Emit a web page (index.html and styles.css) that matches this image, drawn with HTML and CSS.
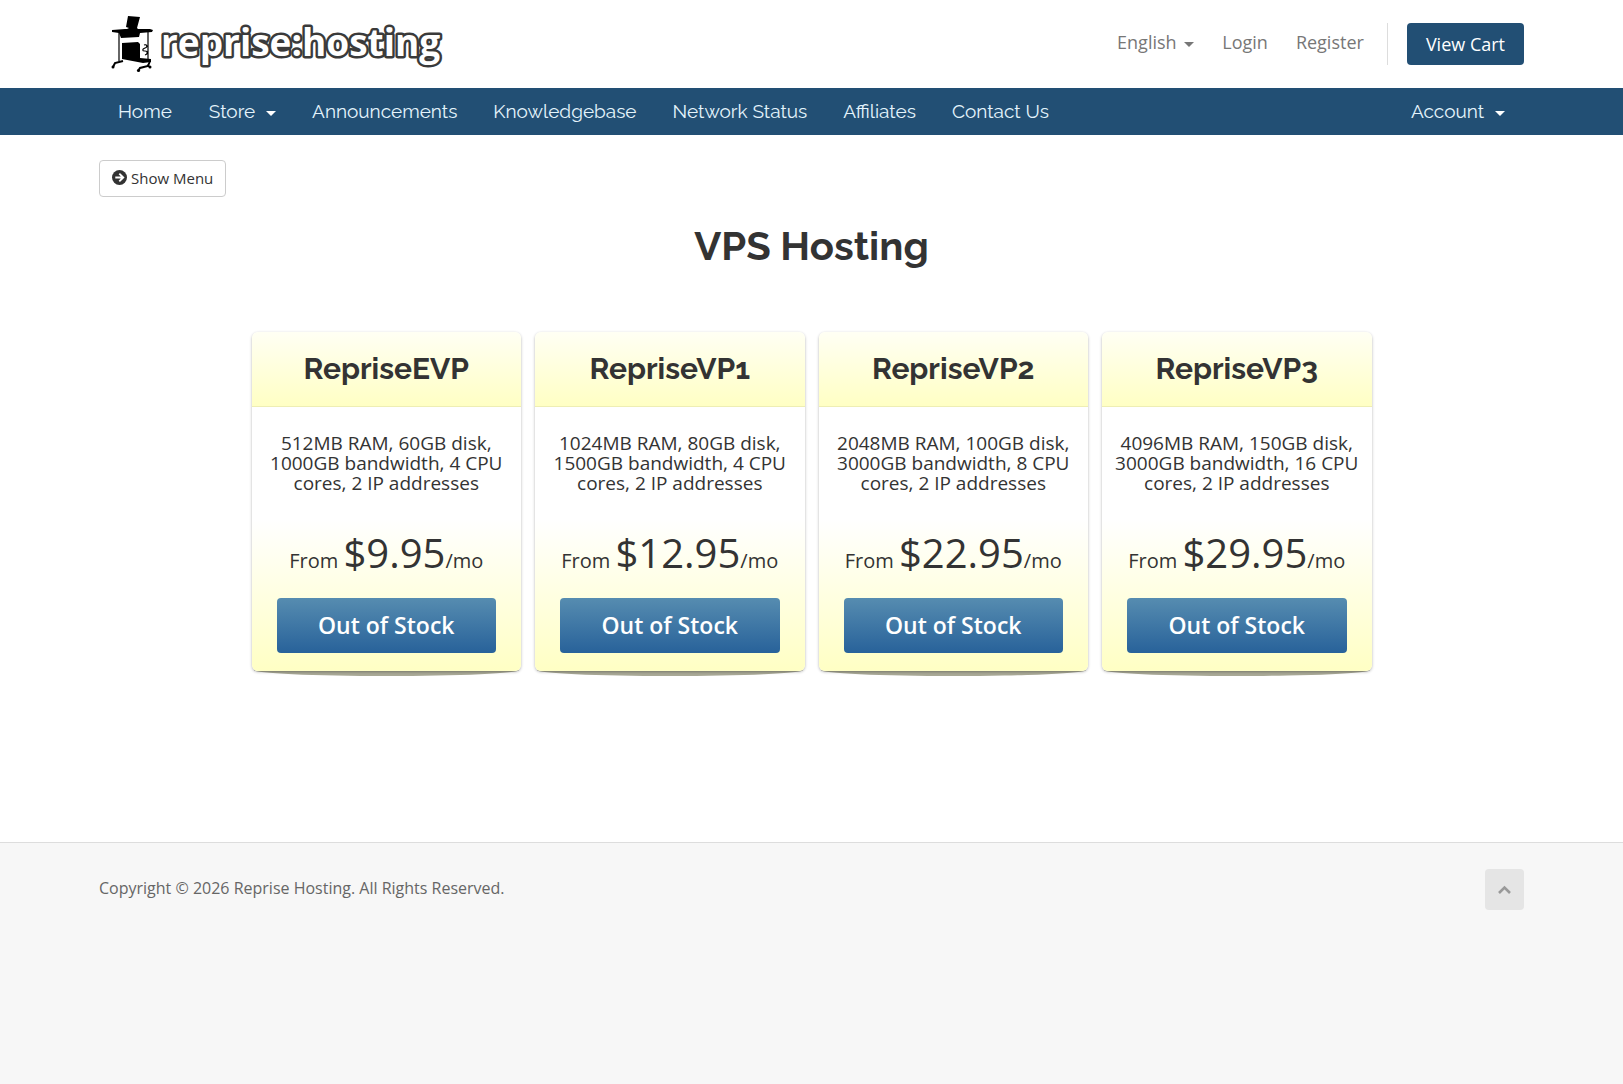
FILE: index.html
```
<!DOCTYPE html>
<html lang="en">
<head>
  <meta charset="utf-8">
  <meta name="viewport" content="width=device-width, initial-scale=1">
  <title>VPS Hosting - Reprise Hosting</title>
  <link rel="stylesheet" href="styles.css">
</head>
<body>

<header id="header">
  <div class="container">
    <a href="#" class="logo" aria-label="Reprise Hosting">
      <svg width="336" height="66" viewBox="0 0 336 66">
        <!-- computer desk -->
        <g fill="#000">
          <path d="M17 5l12 1-3 11 2 2H14l4-2-3-1z"/>
          <path d="M1 19l13-1h25l3 1-1 2-12 1-1 4-18 1-2-5-7-1z"/>
          <path d="M11 32l16-1 2 2v14l11 1v3l-8 1-21-4z"/>
        </g>
        <g fill="none" stroke="#000" stroke-width="1.2">
          <path d="M8 21v29M37 20v29M33 34c3-1 4 2 1 3s-3 3 0 3 3 3 0 4"/>
          <path d="M12 50L4 52l-2 4M39 50l-2 5-8 2-2 3M36 54l3 2" stroke-width="2"/>
        </g>
        <circle cx="2" cy="56" r="1.500"/>
        <circle cx="27.500" cy="59.500" r="1.600"/>
        <circle cx="39" cy="56" r="1.500"/>
        <text class="logo-text" x="50" y="45">reprise:hosting</text>
      </svg>
    </a>
    <ul class="top-nav">
      <li><a href="#">English <b class="caret"></b></a></li>
      <li><a href="#">Login</a></li>
      <li><a href="#">Register</a></li>
      <li class="primary-action"><a href="#" class="btn-cart">View Cart</a></li>
    </ul>
  </div>
</header>

<nav id="main-menu">
  <div class="container">
    <ul class="nav">
      <li><a href="#">Home</a></li>
      <li><a href="#">Store <b class="caret"></b></a></li>
      <li><a href="#">Announcements</a></li>
      <li><a href="#">Knowledgebase</a></li>
      <li><a href="#">Network Status</a></li>
      <li><a href="#">Affiliates</a></li>
      <li><a href="#">Contact Us</a></li>
    </ul>
    <ul class="nav">
      <li><a href="#">Account <b class="caret"></b></a></li>
    </ul>
  </div>
</nav>

<main id="main-body">
  <div class="container">
    <button type="button" class="btn-show-menu">
      <svg width="15" height="15" viewBox="0 0 16 16">
        <circle cx="8" cy="8" r="8" fill="#333"/>
        <path d="M3.500 8h8M7.800 3.800L12 8l-4.200 4.200" fill="none" stroke="#fff" stroke-width="2"/>
      </svg>
      Show Menu
    </button>

    <h1>VPS Hosting</h1>

    <div class="plans">
      <div class="plan">
        <h2>RepriseEVP</h2>
        <p class="desc">512MB RAM, 60GB disk, 1000GB bandwidth, 4 CPU cores, 2 IP addresses</p>
        <div class="plan-foot">
          <p class="price">From <span>$9.95</span>/mo</p>
          <button type="button" class="btn-order">Out of Stock</button>
        </div>
      </div>
      <div class="plan">
        <h2>RepriseVP1</h2>
        <p class="desc">1024MB RAM, 80GB disk, 1500GB bandwidth, 4 CPU cores, 2 IP addresses</p>
        <div class="plan-foot">
          <p class="price">From <span>$12.95</span>/mo</p>
          <button type="button" class="btn-order">Out of Stock</button>
        </div>
      </div>
      <div class="plan">
        <h2>RepriseVP2</h2>
        <p class="desc">2048MB RAM, 100GB disk, 3000GB bandwidth, 8 CPU cores, 2 IP addresses</p>
        <div class="plan-foot">
          <p class="price">From <span>$22.95</span>/mo</p>
          <button type="button" class="btn-order">Out of Stock</button>
        </div>
      </div>
      <div class="plan">
        <h2>RepriseVP3</h2>
        <p class="desc">4096MB RAM, 150GB disk, 3000GB bandwidth, 16 CPU cores, 2 IP addresses</p>
        <div class="plan-foot">
          <p class="price">From <span>$29.95</span>/mo</p>
          <button type="button" class="btn-order">Out of Stock</button>
        </div>
      </div>
    </div>
  </div>
</main>

<footer id="footer">
  <div class="container">
    <p>Copyright &copy; 2026 Reprise Hosting. All Rights Reserved.</p>
    <a href="#header" class="back-to-top" aria-label="Back to top">
      <svg width="15" height="10" viewBox="0 0 15 10"><path d="M2 8l5.500-5.500L13 8" fill="none" stroke="#999" stroke-width="2.600"/></svg>
    </a>
  </div>
</footer>

</body>
</html>
```

FILE: styles.css
```
* { box-sizing: border-box; }

body {
  margin: 0;
  background: #f7f7f7;
  color: #333;
  font: 16px/24px "Open Sans", Verdana, sans-serif;
}
ul { list-style: none; margin: 0; padding: 0; }
a { text-decoration: none; }
button { font-family: inherit; cursor: pointer; }

.container {
  max-width: 1455px;
  margin: 0 auto;
  padding: 0 15px;
}
.caret {
  display: inline-block;
  margin-left: 3px;
  vertical-align: middle;
  border-top: 5px solid;
  border-left: 5px solid transparent;
  border-right: 5px solid transparent;
}

/* header */
#header { background: #fff; }
#header .container {
  display: flex;
  justify-content: space-between;
  align-items: center;
  height: 88px;
}
.logo { padding-left: 12px; }
.logo svg { display: block; overflow: visible; }
.logo-text {
  font: bold 37px "Open Sans", sans-serif;
  fill: #fff;
  stroke: #3a3a3a;
  stroke-width: 5px;
  stroke-linejoin: round;
  paint-order: stroke;
}
.top-nav { display: flex; }
.top-nav a {
  display: block;
  padding: 0 14px;
  color: #777;
  font-size: 18px;
  line-height: 39px;
}
.top-nav .primary-action {
  margin-left: 9px;
  padding-left: 19px;
  border-left: 1px solid #ddd;
}
.top-nav .btn-cart {
  padding: 1px 19px;
  background: #224f74;
  border-radius: 4px;
  color: #fff;
  line-height: 40px;
}

/* main menu */
#main-menu { background: #224f74; }
#main-menu .container {
  display: flex;
  justify-content: space-between;
}
.nav { display: flex; }
.nav a {
  display: block;
  padding: 0 18px;
  color: #e4f4fc;
  font: 19px/47px Raleway, Lato, sans-serif;
}
.nav li:first-child a { padding: 0 19px; }
.nav .caret { margin-left: 6px; color: #fff; }

/* content */
#main-body {
  min-height: 707px;
  padding: 25px 0;
  background: #fff;
}
.btn-show-menu {
  display: flex;
  align-items: center;
  gap: 4px;
  height: 37px;
  padding: 0 12px 2px;
  background: #fff;
  border: 1px solid #ccc;
  border-radius: 4px;
  color: #333;
  font-size: 15px;
}
h1 {
  margin: 25px 0 62px;
  text-align: center;
  font: bold 40px/48px Raleway, Lato, sans-serif;
}
.plans {
  position: relative;
  z-index: 0;
  display: flex;
  gap: 14px;
  max-width: 1120px;
  margin: 0 auto;
}
.plan {
  position: relative;
  flex: 1;
  background: #fff;
  border-radius: 6px;
  box-shadow: 0 1px 3px rgba(0, 0, 0, .3);
  text-align: center;
}
/* curved shadow under the card */
.plan::after {
  content: "";
  position: absolute;
  z-index: -1;
  left: 2px;
  right: 2px;
  bottom: -5px;
  height: 12px;
  background: #a9a996;
  border-radius: 0 0 50% 50%;
}
.plan h2 {
  margin: 0;
  height: 75px;
  border-bottom: 1px solid #eeeeb4;
  border-radius: 6px 6px 0 0;
  background: linear-gradient(#fffff4, #ffffc4);
  font: bold 30px/74px Raleway, Lato, sans-serif;
}
.desc {
  margin: 0;
  padding: 26px 10px;
  font-size: 19px;
  line-height: 20px;
}
.plan-foot {
  padding: 10px 25px 18px;
  border-radius: 0 0 6px 6px;
  background: linear-gradient(#fff, #ffffc4);
}
.price {
  margin: 0 0 13px;
  font-size: 20px;
  line-height: 48px;
  white-space: nowrap;
}
.price span { font-size: 40px; }
.btn-order {
  width: 100%;
  height: 55px;
  padding: 0 0 2px;
  border: 0;
  border-radius: 4px;
  background: linear-gradient(#568cb0, #28629a);
  color: #fff;
  font-size: 23px;
  font-weight: 600;
}

/* footer */
#footer { border-top: 1px solid #ddd; }
#footer .container {
  display: flex;
  justify-content: space-between;
  padding-top: 26px;
  padding-bottom: 26px;
}
#footer p {
  margin: 0;
  color: #666;
  line-height: 38px;
}
.back-to-top {
  display: flex;
  align-items: center;
  justify-content: center;
  width: 39px;
  height: 41px;
  border-radius: 4px;
  background: #e5e5e5;
}
```
